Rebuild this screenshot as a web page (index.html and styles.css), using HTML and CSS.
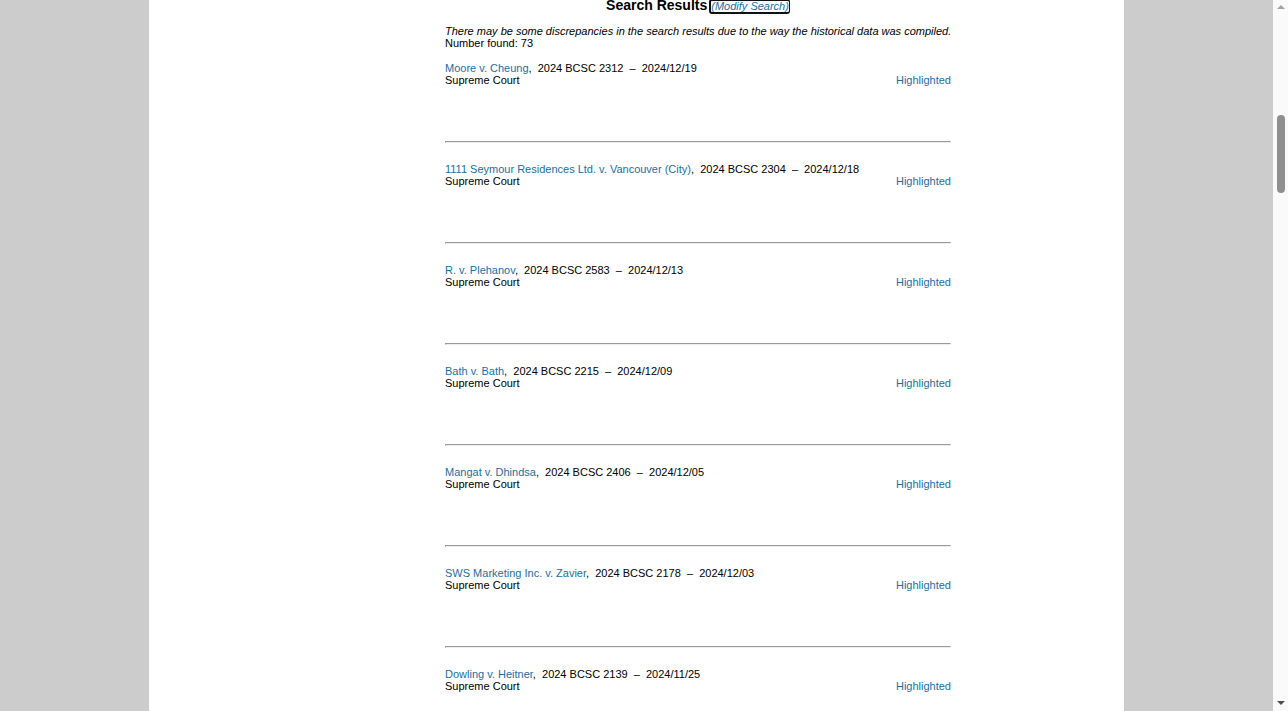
FILE: index.html
```html
<!DOCTYPE html>
<html lang="en">
<head>
<meta charset="utf-8">
<title>Search Results</title>
<link rel="stylesheet" href="styles.css">
</head>
<body>
<div class="viewport">
  <div class="main">
    <div class="page">
      <div class="results">
        <h1 class="title">Search Results<a class="modify" href="#">(Modify Search)</a></h1>
        <p class="note"><em>There may be some discrepancies in the search results due to the way the historical data was compiled.</em><br>Number found: 73</p>
        <div class="list">
          <div class="case">
            <div class="line"><a href="#">Moore v. Cheung</a>,&nbsp; 2024 BCSC 2312&nbsp; &ndash;&nbsp; 2024/12/19</div>
            <div class="line split"><span>Supreme Court</span><a href="#">Highlighted</a></div>
          </div>
          <hr>
          <div class="case">
            <div class="line"><a href="#">1111 Seymour Residences Ltd. v. Vancouver (City)</a>,&nbsp; 2024 BCSC 2304&nbsp; &ndash;&nbsp; 2024/12/18</div>
            <div class="line split"><span>Supreme Court</span><a href="#">Highlighted</a></div>
          </div>
          <hr>
          <div class="case">
            <div class="line"><a href="#">R. v. Plehanov</a>,&nbsp; 2024 BCSC 2583&nbsp; &ndash;&nbsp; 2024/12/13</div>
            <div class="line split"><span>Supreme Court</span><a href="#">Highlighted</a></div>
          </div>
          <hr>
          <div class="case">
            <div class="line"><a href="#">Bath v. Bath</a>,&nbsp; 2024 BCSC 2215&nbsp; &ndash;&nbsp; 2024/12/09</div>
            <div class="line split"><span>Supreme Court</span><a href="#">Highlighted</a></div>
          </div>
          <hr>
          <div class="case">
            <div class="line"><a href="#">Mangat v. Dhindsa</a>,&nbsp; 2024 BCSC 2406&nbsp; &ndash;&nbsp; 2024/12/05</div>
            <div class="line split"><span>Supreme Court</span><a href="#">Highlighted</a></div>
          </div>
          <hr>
          <div class="case">
            <div class="line"><a href="#">SWS Marketing Inc. v. Zavier</a>,&nbsp; 2024 BCSC 2178&nbsp; &ndash;&nbsp; 2024/12/03</div>
            <div class="line split"><span>Supreme Court</span><a href="#">Highlighted</a></div>
          </div>
          <hr>
          <div class="case">
            <div class="line"><a href="#">Dowling v. Heitner</a>,&nbsp; 2024 BCSC 2139&nbsp; &ndash;&nbsp; 2024/11/25</div>
            <div class="line split"><span>Supreme Court</span><a href="#">Highlighted</a></div>
          </div>
          <hr>
        </div>
      </div>
    </div>
  </div>
  <div class="scrollbar" aria-hidden="true">
    <div class="arrow up"></div>
    <div class="track"><div class="thumb"></div></div>
    <div class="arrow down"></div>
  </div>
</div>
</body>
</html>
```
FILE: styles.css
```css
html, body {
  margin: 0;
  padding: 0;
  height: 100%;
  overflow: hidden;
}
body {
  background: #cccccc;
  font-family: "Liberation Sans", Arial, sans-serif;
  font-size: 11px;
  line-height: 12px;
  color: #000;
}
a {
  color: #1b6ea6;
  text-decoration: none;
}
.viewport {
  display: flex;
  height: 100vh;
  overflow: hidden;
}
.main {
  flex: 1;
  overflow: hidden;
  background: #cccccc;
}
.page {
  width: 975px;
  height: 100%;
  margin: 0 auto;
  background: #ffffff;
  overflow: hidden;
}
.results {
  width: 506px;
  margin-left: 296px;
}
.title {
  margin: -3px 0 0 0;
  font-size: 14px;
  line-height: 16px;
  font-weight: bold;
  text-align: center;
}
.modify {
  display: inline-block;
  margin-left: 2px;
  font-size: 11px;
  line-height: 11px;
  font-weight: normal;
  font-style: italic;
  border: 2px solid #111;
  border-right-width: 1px;
  border-radius: 3px;
}
.note {
  margin: 11px 0 0 0;
  white-space: nowrap;
}
.list {
  margin-top: 13px;
}
.case {
  padding-bottom: 55px;
}
.split {
  display: flex;
  justify-content: space-between;
}
.list hr {
  width: 504px;
  margin: 0 0 20px 0;
  border: 1px inset;
  color: gray;
  height: 0;
}
.scrollbar {
  width: 15px;
  background: #fafafa;
  display: flex;
  flex-direction: column;
  align-items: center;
}
.arrow {
  width: 0;
  height: 0;
  border-left: 4px solid transparent;
  border-right: 4px solid transparent;
}
.arrow.up {
  margin-top: 5px;
  border-bottom: 4px solid #a3a3a3;
}
.arrow.down {
  margin-bottom: 6px;
  border-top: 4px solid #505050;
}
.track {
  flex: 1;
  width: 100%;
  display: flex;
  justify-content: center;
  padding-top: 106px;
}
.thumb {
  width: 8px;
  height: 78px;
  border-radius: 4px;
  background: #8f8f8f;
}
```
